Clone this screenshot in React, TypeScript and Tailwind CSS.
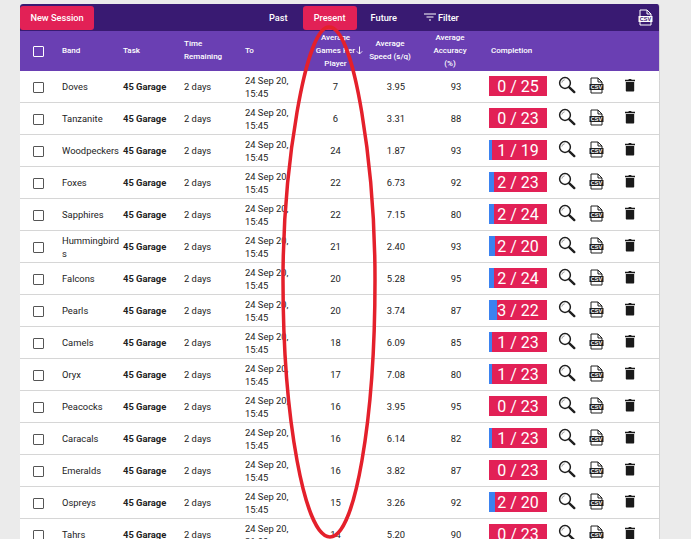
const rows: [string, number, string, string, string, number, number][] = [
  ["Doves", 7, "3.95", "93", "15:45", 0, 25],
  ["Tanzanite", 6, "3.31", "88", "15:45", 0, 23],
  ["Woodpeckers", 24, "1.87", "93", "15:45", 1, 19],
  ["Foxes", 22, "6.73", "92", "15:45", 2, 23],
  ["Sapphires", 22, "7.15", "80", "15:45", 2, 24],
  ["Hummingbirds", 21, "2.40", "93", "15:45", 2, 20],
  ["Falcons", 20, "5.28", "95", "15:45", 2, 24],
  ["Pearls", 20, "3.74", "87", "15:45", 3, 22],
  ["Camels", 18, "6.09", "85", "15:45", 1, 23],
  ["Oryx", 17, "7.08", "80", "15:45", 1, 23],
  ["Peacocks", 16, "3.95", "95", "15:45", 0, 23],
  ["Caracals", 16, "6.14", "82", "15:45", 1, 23],
  ["Emeralds", 16, "3.82", "87", "15:45", 0, 23],
  ["Ospreys", 15, "3.26", "92", "15:45", 2, 20],
  ["Tahrs", 14, "5.20", "90", "21:00", 0, 23],
];

function CsvIcon({ light }: { light?: boolean }) {
  const c = light ? "#ffffff" : "#1f1f1f";
  const inner = light ? "#3a1a72" : "#ffffff";
  return (
    <svg width="15" height="17" viewBox="0 0 15 17" className="shrink-0">
      <path d="M2 7V1h7l4 4v2M2 13v3h11v-3M9 1v4h4" fill={light ? "none" : "#fff"} stroke={c} strokeWidth="1" />
      <rect x="0.5" y="7" width="14" height="6" fill={c} />
      <text x="7.5" y="12" textAnchor="middle" fontSize="5.5" fontWeight="700" fontFamily="Liberation Sans, sans-serif" fill={inner}>
        CSV
      </text>
    </svg>
  );
}

function SearchIcon() {
  return (
    <svg width="18" height="18" viewBox="0 0 18 18" className="shrink-0">
      <circle cx="7" cy="7" r="5.4" fill="none" stroke="#1f1f1f" strokeWidth="1.5" />
      <path d="M3.8 6.6A3.4 3.4 0 0 1 6.6 3.8" fill="none" stroke="#9a9a9a" strokeWidth="1" />
      <path d="M11.3 11.3l5 4.8" stroke="#1f1f1f" strokeWidth="2.4" strokeLinecap="round" />
    </svg>
  );
}

function TrashIcon() {
  return (
    <svg width="12" height="14" viewBox="0 0 12 14" className="shrink-0">
      <path d="M1 1.8H4.2L5 1H7L7.8 1.8H11V3.2H1Z M1.8 4H10.2V12.5C10.2 13.2 9.8 13.6 9.2 13.6H2.8C2.2 13.6 1.8 13.2 1.8 12.5Z" fill="#1a1a1a" />
    </svg>
  );
}

function Checkbox({ light }: { light?: boolean }) {
  return <div className={`h-[11px] w-[11px] rounded-[1px] border ${light ? "border-white" : "border-[#555555]"}`} />;
}

export default function App() {
  return (
    <div className="relative h-[539px] overflow-hidden bg-[#ebebeb] pl-5 pt-1 font-['Roboto',sans-serif] text-[9.4px] text-[#222222]">
      <div className="w-[640px] overflow-hidden rounded-t-[3px] border-r border-[#d4d4d4] bg-white">
        <div className="flex h-[27px] items-center bg-[#391a72] text-[9.2px] font-medium text-white">
          <button className="h-6 w-[74px] rounded-[3px] bg-[#e22156] font-medium">New Session</button>
          <span className="ml-[175px]">Past</span>
          <button className="ml-[15px] h-6 w-[54px] rounded-[3px] bg-[#e22156] font-medium">Present</button>
          <span className="ml-[14px]">Future</span>
          <div className="ml-[27px] flex items-center gap-[2px]">
            <svg width="12" height="8" viewBox="0 0 12 8">
              <path d="M0 1h12M2.5 4h7M5 7h2" stroke="#ffffff" strokeWidth="1" />
            </svg>
            <span>Filter</span>
          </div>
          <div className="ml-auto mr-[6px] flex">
            <CsvIcon light />
          </div>
        </div>
        <div className="flex h-10 items-center bg-[#6a3fb3] pb-[2px] text-[8px] font-medium leading-[13px] text-white">
          <div className="mt-[2px] w-[42px] pl-[13px]"><Checkbox light /></div>
          <div className="w-[61px]">Band</div>
          <div className="w-[61px]">Task</div>
          <div className="w-[61px]">Time<br />Remaining</div>
          <div className="w-[60px]">To</div>
          <div className="w-[61px] text-center">Average<br />Games Per<br />Player</div>
          <div className="relative w-[60px] pr-3 text-center">
            <svg width="7" height="9" viewBox="0 0 7 9" className="absolute -left-[10px] top-[9px]">
              <path d="M3.5 0.5V8M0.8 5.3L3.5 8L6.2 5.3" fill="none" stroke="#ffffff" strokeWidth="0.9" />
            </svg>
            Average<br />Speed (s/q)
          </div>
          <div className="w-[60px] pr-3 text-center">Average<br />Accuracy<br />(%)</div>
          <div className="pl-[5px]">Completion</div>
        </div>
        {rows.map(([band, games, speed, acc, time, done, total]) => (
          <div key={band} className="flex h-8 items-center border-b border-[#d6d6d6] leading-[13px]">
            <div className="mt-[2px] w-[42px] pl-[13px]"><Checkbox /></div>
            <div className="w-[61px] wrap-anywhere">{band}</div>
            <div className="w-[61px] font-bold">45 Garage</div>
            <div className="w-[61px]">2 days</div>
            <div className="w-[60px]">24 Sep 20,<br />{time}</div>
            <div className="w-[61px] text-center">{games}</div>
            <div className="w-[60px] text-center">{speed}</div>
            <div className="w-[60px] text-center">{acc}</div>
            <div className="relative mb-[1px] ml-[3px] flex h-5 w-[58px] items-center justify-center overflow-hidden bg-[#e22156] text-[16px] text-white">
              <div className="absolute inset-y-0 left-0 bg-[#3b82f0]" style={{ width: `${(done / total) * 58}px` }} />
              <span className="relative">{done} / {total}</span>
            </div>
            <div className="mb-[3px] ml-[11px]"><SearchIcon /></div>
            <div className="mb-[2px] ml-[13px]"><CsvIcon /></div>
            <div className="mb-[3px] ml-[20px]"><TrashIcon /></div>
          </div>
        ))}
      </div>
      <svg width="691" height="539" viewBox="0 0 691 539" className="pointer-events-none absolute left-0 top-0">
        <path d="M329 27C305 27 283 170 283 280C283 420 305 537 330 537C355 537 375 420 375 280C375 170 355 27 329 27Z" fill="none" stroke="#e4202b" strokeWidth="3.5" />
      </svg>
    </div>
  );
}
